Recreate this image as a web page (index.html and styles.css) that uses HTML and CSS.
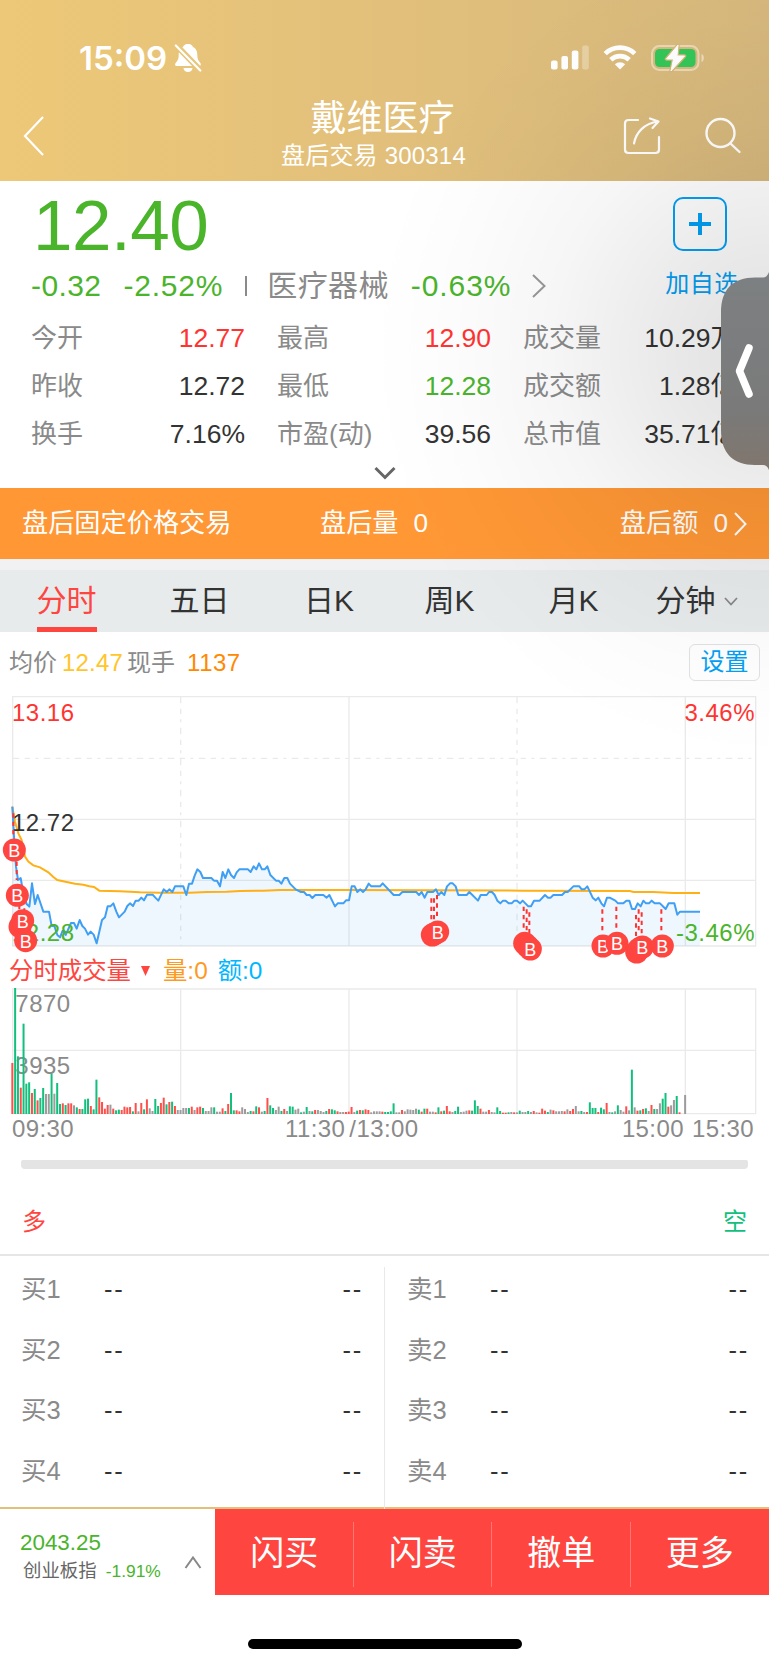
FILE: index.html
```
<!DOCTYPE html>
<html lang="zh-CN">

<head>
  <meta charset="UTF-8">
  <meta name="viewport" content="width=device-width, initial-scale=1.0">
  <title>戴维医疗 300314</title>
  <link rel="stylesheet" href="styles.css">
</head>

<body>
  <div class="page">
    <header class="header">
      <div class="status-bar">
        <span class="time">15:09</span>
        <svg class="bell" width="28" height="30" viewBox="0 0 28 30">
          <path d="M14 1C10.500 1 9.300 3.300 8.900 4.100C5.500 6 4.700 9 4.700 12C4.700 16 3.700 17.500 2 19.400C.4 21.200 1 23 3 23H25C27 23 27.500 21.200 26 19.400C24.300 17.500 23.300 16 23.300 12C23.300 9 22.500 6 19.100 4.100C18.700 3.300 17.500 1 14 1ZM9.500 25H18.500C18.300 27.500 16.500 29 14 29S9.700 27.500 9.500 25Z" fill="#fff" />
          <path d="M0 0L28 29" stroke="#e8c57a" stroke-width="6" />
          <path d="M1.800 2.500L26.300 27.500" stroke="#fff" stroke-width="2.200" stroke-linecap="round" />
        </svg>
        <svg class="signal" width="38" height="25" viewBox="0 0 38 25" fill="#fff">
          <rect x="0" y="15.500" width="6.600" height="9" rx="2" />
          <rect x="10.400" y="11" width="6.600" height="13.500" rx="2" />
          <rect x="20.800" y="5.500" width="6.600" height="19" rx="2" />
          <rect x="31.200" y=".5" width="6.600" height="24" rx="2" opacity=".3" />
        </svg>
        <svg class="wifi" width="34" height="25" viewBox="0 0 34 25" fill="none" stroke="#fff" stroke-width="4.700">
          <path d="M2.200 8.600A21.500 21.500 0 0 1 31.800 8.600" />
          <path d="M7.800 14.800A13.300 13.300 0 0 1 26.200 14.800" />
          <path d="M11.800 19.300A7.500 7.500 0 0 1 22.200 19.300L17 24.600Z" fill="#fff" stroke="none" />
        </svg>
        <svg class="battery" width="54" height="28" viewBox="0 0 54 28">
          <rect x="1" y="2" width="46.500" height="24" rx="7.500" fill="none" stroke="#fff" stroke-opacity=".45" stroke-width="2" />
          <path d="M50.500 10C53.600 11 53.600 17 50.500 18Z" fill="#fff" opacity=".5" />
          <rect x="4" y="5" width="40.500" height="18" rx="4.500" fill="#34c759" />
          <path d="M27 1L15.500 15H22.500L20 27L33.500 12H26Z" fill="#fff" stroke="#d6b779" stroke-width="3.500" stroke-linejoin="round" />
          <path d="M27 1L15.500 15H22.500L20 27L33.500 12H26Z" fill="#fff" stroke="#fff" stroke-width="1" stroke-linejoin="round" />
        </svg>
      </div>
      <div class="nav-bar">
        <svg class="back" width="22" height="42" viewBox="0 0 22 42" fill="none" stroke="#fff" stroke-width="2.200">
          <path d="M20 2L2 21L20 40" />
        </svg>
        <div class="title">
          <h1>戴维医疗</h1>
          <p>盘后交易 300314</p>
        </div>
        <div class="nav-icons">
          <svg width="38" height="38" viewBox="0 0 38 38" fill="none" stroke="#fff" stroke-width="2.200" stroke-linecap="round" stroke-linejoin="round">
            <path d="M15 3H5.500Q2 3 2 6.500V32.500Q2 36 5.500 36H32.500Q36 36 36 32.500V20" />
            <path d="M11 26.500C13 15.500 21 6.500 35 4.500M27 1.500L35.500 4.500L29.500 11" />
          </svg>
          <svg width="38" height="38" viewBox="0 0 38 38" fill="none" stroke="#fff" stroke-width="2.400" stroke-linecap="round">
            <circle cx="16.500" cy="16" r="14" />
            <path d="M26.500 26.500L35.500 35" />
          </svg>
        </div>
      </div>
    </header>

    <section class="quote">
      <div class="price-row">
        <div class="price">12.40</div>
        <button class="add" type="button">
          <svg width="24" height="24" viewBox="0 0 24 24" stroke="#02a0f5" stroke-width="4">
            <path d="M12 1V23M1 12H23" />
          </svg>
        </button>
      </div>
      <div class="change-row">
        <span class="down">-0.32</span>
        <span class="down rate">-2.52%</span>
        <span class="bar"></span>
        <span class="sector">医疗器械</span>
        <span class="down sector-rate">-0.63%</span>
        <svg width="14" height="24" viewBox="0 0 14 24" fill="none" stroke="#999" stroke-width="2">
          <path d="M1 1L12.500 12L1 23" />
        </svg>
        <span class="add-text">加自选</span>
      </div>
      <dl class="stats">
        <div><dt>今开</dt><dd class="up">12.77</dd></div>
        <div><dt>最高</dt><dd class="up">12.90</dd></div>
        <div><dt>成交量</dt><dd>10.29万</dd></div>
        <div><dt>昨收</dt><dd>12.72</dd></div>
        <div><dt>最低</dt><dd class="down">12.28</dd></div>
        <div><dt>成交额</dt><dd>1.28亿</dd></div>
        <div><dt>换手</dt><dd>7.16%</dd></div>
        <div><dt>市盈(动)</dt><dd>39.56</dd></div>
        <div><dt>总市值</dt><dd>35.71亿</dd></div>
      </dl>
      <svg class="expand" width="22" height="14" viewBox="0 0 22 14" fill="none" stroke="#666" stroke-width="3">
        <path d="M1.500 2L11 11.500L20.500 2" />
      </svg>
    </section>

    <section class="after-hours">
      <span>盘后固定价格交易</span>
      <span>盘后量<b>0</b></span>
      <span class="amount"><span>盘后额<b>0</b></span>
        <svg width="13" height="24" viewBox="0 0 13 24" fill="none" stroke="#fff" stroke-width="2">
          <path d="M1 1L11.500 12L1 23" />
        </svg>
      </span>
    </section>

    <nav class="tabs">
      <a class="active">分时</a>
      <a>五日</a>
      <a>日K</a>
      <a>周K</a>
      <a>月K</a>
      <a>分钟
        <svg width="14" height="9" viewBox="0 0 14 9" fill="none" stroke="#888" stroke-width="1.800">
          <path d="M1 1L7 7.500L13 1" />
        </svg>
      </a>
    </nav>

    <section class="chart">
      <div class="chart-info">
        <span>均价</span>
        <span class="avg">12.47</span>
        <span>现手</span>
        <span class="hand">1137</span>
        <button class="setting" type="button">设置</button>
      </div>

      <svg class="price-chart" width="769" height="266" viewBox="0 3 2307 798">
        <g class="grid">
          <path d="M38 50H2267V798H38ZM38 418H2267M38 601H2267M1047 50V798M2056 50V798" />
          <path d="M38 235H2267" stroke-dasharray="20 16 16 16 9 16" />
          <path d="M542 50V798M1551 50V798" stroke-dasharray="20 16 16 16 9 16" />
        </g>
        <path id="area" class="area" />
        <polyline class="avg-line" points="37,380 45,425 55,460 65,480 75,530 85,545 100,556 120,562 145,577 160,591 172,600 200,606 225,611 250,614 268,619 282,621 298,632 360,634 420,637 480,638 570,638 620,636 680,635 720,633 790,632 840,630 1047,630 1570,632 1890,633 1900,636 1960,636 2020,639 2100,639" />
        <polyline id="priceLine" class="price-line" />
        <g class="axis">
          <text class="up" x="36" y="122">13.16</text>
          <text class="flat" x="36" y="453">12.72</text>
          <text class="down" x="36" y="782">12.28</text>
          <text class="up" x="2265" y="122" text-anchor="end">3.46%</text>
          <text class="down" x="2265" y="782" text-anchor="end">-3.46%</text>
        </g>
        <g id="marks" class="marks"></g>
      </svg>

      <div class="volume-info">
        <span class="name">分时成交量</span>
        <svg width="11" height="11" viewBox="0 0 11 11"><path d="M1 0H10L5.500 10Z" fill="#ff4540" /></svg>
        <span class="vol">量:0</span>
        <span class="amt">额:0</span>
      </div>

      <svg class="volume-chart" width="769" height="133" viewBox="0 105 2307 399">
        <path class="grid" d="M38 117H2267V491H38ZM38 301H2267M542 117V491M1047 117V491M1551 117V491M2056 117V491" />
        <g class="axis">
          <text x="46" y="187">7870</text>
          <text x="46" y="372">3935</text>
        </g>
        <g id="bars"></g>
      </svg>

      <div class="time-axis">
        <span>09:30</span>
        <span class="noon">11:30<i>/</i>13:00</span>
        <span class="close">15:00</span>
        <span>15:30</span>
      </div>
      <div class="scroll-track"></div>
    </section>

    <section class="sides">
      <span class="long">多</span>
      <span class="short">空</span>
    </section>

    <section class="order-book">
      <ul>
        <li><span>买1</span><b>--</b><b>--</b></li>
        <li><span>买2</span><b>--</b><b>--</b></li>
        <li><span>买3</span><b>--</b><b>--</b></li>
        <li><span>买4</span><b>--</b><b>--</b></li>
      </ul>
      <ul>
        <li><span>卖1</span><b>--</b><b>--</b></li>
        <li><span>卖2</span><b>--</b><b>--</b></li>
        <li><span>卖3</span><b>--</b><b>--</b></li>
        <li><span>卖4</span><b>--</b><b>--</b></li>
      </ul>
    </section>

    <footer class="footer">
      <div class="index">
        <div>
          <div class="index-value">2043.25</div>
          <div class="index-name">创业板指 <span>-1.91%</span></div>
        </div>
        <svg width="18" height="13" viewBox="0 0 18 13" fill="none" stroke="#888" stroke-width="2">
          <path d="M1.500 12L9 1.500L16.500 12" />
        </svg>
      </div>
      <button type="button">闪买</button>
      <button type="button">闪卖</button>
      <button type="button">撤单</button>
      <button type="button">更多</button>
    </footer>
    <div class="home-indicator"></div>

    <div class="shade"></div>
    <svg class="drawer" width="48" height="206" viewBox="0 0 48 206">
      <defs>
        <linearGradient id="drawerFill" x1="0" y1="0" x2="0" y2="1">
          <stop offset="0" stop-color="#7d8082" />
          <stop offset=".7" stop-color="#7a7a7a" />
          <stop offset="1" stop-color="#80766d" />
        </linearGradient>
      </defs>
      <path d="M48 4Q46 9.500 42 9.500H34C12 9.500 0 21 0 45V162C0 185 12 197 34 197H42Q46 197 48 202Z" fill="url(#drawerFill)" />
      <path d="M28 80L18.500 103L28 126" fill="none" stroke="#fff" stroke-width="7.500" stroke-linecap="round" stroke-linejoin="round" />
    </svg>
  </div>

  <script src="chart.js"></script>
</body>

</html>
```
FILE: styles.css
```
* {
  box-sizing: border-box;
  margin: 0;
  padding: 0;
}

body {
  font-family: "Liberation Sans", "Noto Sans CJK SC", sans-serif;
  font-weight: 400;
  color: #333;
  background-color: #fff;
}

svg {
  display: block;
  flex: none;
}

button {
  font: inherit;
  border: none;
  background: none;
}

b,
i {
  font-weight: inherit;
  font-style: normal;
}

.page {
  position: relative;
  width: 769px;
  height: 1665px;
  overflow: hidden;
}

.up {
  color: #ff3431;
  fill: #ff3431;
}

.down {
  color: #4ab42b;
  fill: #4ab42b;
}

.flat {
  fill: #333;
}

/* header */
.header {
  height: 181px;
  color: #fff;
  background: linear-gradient(to right, #edc878, #e2c07b 50%, #d6b87d);
}

.status-bar {
  display: flex;
  align-items: center;
  height: 90px;
  padding: 25px 64px 0 79px;
}

.time {
  font-family: Inter, sans-serif;
  font-size: 33px;
  font-weight: 600;
}

.bell {
  margin-left: 7px;
}

.signal {
  margin-left: auto;
}

.wifi {
  margin-left: 14px;
}

.battery {
  margin-left: 14px;
}

.nav-bar {
  display: grid;
  grid-template-columns: 1fr auto 1fr;
  align-items: center;
  height: 91px;
  padding: 0 27px 0 23px;
}

.title {
  text-align: center;
  padding-bottom: 4px;
}

.title h1 {
  font-size: 36px;
  font-weight: 400;
  line-height: 44px;
}

.title p {
  padding-right: 18px;
  font-size: 24px;
  line-height: 30px;
  letter-spacing: 0.2px;
}

.nav-icons {
  display: flex;
  justify-content: flex-end;
  gap: 43px;
}

/* quote */
.quote {
  height: 307px;
  padding-left: 31px;
}

.price-row {
  display: flex;
  justify-content: space-between;
  height: 80px;
  padding-right: 42px;
}

.price {
  padding: 4px 0 0 2px;
  font-size: 71px;
  line-height: 82px;
  letter-spacing: -0.5px;
  color: #4ab42b;
}

.add {
  display: flex;
  align-items: center;
  justify-content: center;
  width: 54px;
  height: 54px;
  margin-top: 16px;
  border: 2px solid #02a0f5;
  border-radius: 10px;
}

.change-row {
  display: flex;
  align-items: center;
  height: 50px;
  font-size: 30px;
  line-height: 50px;
  letter-spacing: 0.4px;
}

.rate {
  margin-left: 22px;
  letter-spacing: 0.8px;
}

.sector-rate {
  letter-spacing: 0.9px;
}

.bar {
  width: 2px;
  height: 20px;
  margin: 0 20px 0 22px;
  background-color: #8a8a8a;
}

.sector {
  margin-right: 22px;
  color: #8a8a8a;
}

.change-row svg {
  margin-left: 21px;
}

.add-text {
  margin-left: 119px;
  padding-bottom: 5px;
  font-size: 24px;
  color: #02a0f5;
}

.stats {
  display: grid;
  grid-template-columns: repeat(3, 214px);
  column-gap: 32px;
  padding-top: 3px;
  font-size: 26px;
  line-height: 48px;
}

.stats div {
  display: flex;
  justify-content: space-between;
}

.stats dt {
  color: #8a8a8a;
}

.stats dd {
  font-size: 26.5px;
}

.expand {
  margin: 8px 0 0 343px;
}

/* after hours */
.after-hours {
  display: grid;
  grid-template-columns: 298px 1fr auto;
  align-items: center;
  height: 71px;
  padding: 0 22px 2px;
  font-size: 26.2px;
  line-height: 40px;
  color: #fff;
  background-color: #ff9735;
}

.after-hours b {
  margin-left: 15px;
}

.amount {
  display: flex;
  align-items: center;
}

.amount svg {
  margin: 3px 0 0 6px;
}

/* tabs */
.tabs {
  display: grid;
  grid-template-columns: 133px 133px 126px 115px 133px 113px;
  height: 73px;
  border-top: 11px solid #f1f1f3;
  background-color: #e7ebec;
}

.tabs a {
  display: flex;
  align-items: center;
  justify-content: center;
  font-size: 30px;
  line-height: 50px;
}

.tabs .active {
  justify-self: center;
  padding-top: 5px;
  color: #ff4540;
  border-bottom: 5px solid #ff4540;
}

.tabs svg {
  margin-left: 8px;
}

/* chart */
.chart-info {
  display: flex;
  align-items: center;
  height: 49px;
  padding: 12px 9px 0;
  font-size: 24px;
  line-height: 36px;
  color: #8a8a8a;
}

.avg {
  margin: 0 4px 0 5px;
  letter-spacing: 0.2px;
  color: #ffc52b;
}

.hand {
  margin-left: 12px;
  letter-spacing: 0.5px;
  color: #ff8a00;
}

.setting {
  width: 71px;
  height: 37px;
  margin: 0 0 1px auto;
  line-height: 34px;
  color: #02a0f5;
  border: 1px solid #e0e2e4;
  border-radius: 6px;
}

.price-chart {
  position: relative;
  overflow: visible;
}

.grid {
  fill: none;
  stroke: #eaeaea;
  stroke-width: 4;
}

.area {
  fill: #3f9cf5;
  fill-opacity: 0.09;
}

.avg-line {
  fill: none;
  stroke: #ffb014;
  stroke-width: 6;
}

.price-line {
  fill: none;
  stroke: #3f9ff5;
  stroke-width: 6;
  stroke-linejoin: round;
}

.axis {
  font-size: 72px;
  letter-spacing: 1.5px;
}

.volume-chart .axis {
  fill: #8a8a8a;
}

.marks circle {
  fill: #ff4540;
}

.marks text {
  font-size: 54px;
  fill: #fff;
  text-anchor: middle;
}

.marks path {
  stroke: #ff3431;
  stroke-width: 6;
  stroke-dasharray: 13 12;
}

.volume-info {
  display: flex;
  align-items: center;
  height: 38px;
  padding: 10px 0 0 9px;
  font-size: 24.4px;
  line-height: 28px;
}

.volume-info .name {
  margin-right: 9px;
  color: #ff4540;
}

.volume-info .vol {
  margin: 0 10px 0 12px;
  color: #ff9a1f;
}

.volume-info .amt {
  color: #00b7ff;
}

.time-axis {
  display: flex;
  height: 42px;
  padding: 0 15px 0 12px;
  font-size: 24px;
  line-height: 22px;
  letter-spacing: 0.4px;
  color: #8a8a8a;
}

.noon {
  margin-left: 211px;
}

.noon i {
  margin-left: 4px;
}

.close {
  margin: 0 8px 0 auto;
}

.scroll-track {
  height: 9px;
  margin: 0 21px;
  border-radius: 2px 2px 4px 4px;
  background-color: #e4e4e4;
}

/* order book */
.sides {
  display: flex;
  justify-content: space-between;
  height: 87px;
  padding: 35px 22px 0;
  font-size: 24px;
  line-height: 36px;
  border-bottom: 2px solid #e6e6e6;
}

.long {
  color: #ff4540;
}

.short {
  color: #13bf7d;
}

.order-book {
  display: grid;
  grid-template-columns: 385px 1fr;
  height: 251px;
  padding-top: 11px;
}

.order-book ul {
  list-style: none;
  padding: 0 20px 0 22px;
}

.order-book ul:first-child {
  padding: 0 21px;
  border-right: 1px solid #e9e9e9;
}

.order-book li {
  display: grid;
  grid-template-columns: 83px 1fr auto;
  height: 60.7px;
  font-size: 25.5px;
  line-height: 44px;
}

.order-book span {
  color: #8a8a8a;
}

.order-book b {
  letter-spacing: 1.8px;
}

/* footer */
.footer {
  display: grid;
  grid-template-columns: 215px repeat(4, 1fr);
  height: 88px;
  border-top: 2px solid #e2c07b;
}

.index {
  display: flex;
  justify-content: space-between;
  padding: 20px 13px 0 20px;
}

.index svg {
  margin-top: 27px;
}

.index-value {
  font-size: 22.4px;
  line-height: 28px;
  color: #4ab42b;
}

.index-name {
  padding-left: 3px;
  font-size: 18.4px;
  line-height: 28px;
  color: #666;
  white-space: nowrap;
}

.index-name span {
  margin-left: 4px;
  font-size: 17.4px;
  color: #4ab42b;
}

.footer button {
  padding-bottom: 3px;
  font-size: 34px;
  color: #fff;
  background: linear-gradient(#ff7773, #ff7773) right 13px / 1px 65px no-repeat #ff4540;
}

.footer button:last-child {
  background: #ff4540;
}

.home-indicator {
  width: 274px;
  height: 10px;
  margin: 44px auto 0;
  border-radius: 5px;
  background-color: #000;
}

/* side drawer and the shadow it casts over the page */
.shade {
  position: absolute;
  top: 0;
  right: 0;
  width: 400px;
  height: 800px;
  background: radial-gradient(400px 410px at 400px 350px, rgba(0, 0, 0, 0.12), rgba(0, 0, 0, 0.085) 25%, rgba(0, 0, 0, 0.035) 55%, rgba(0, 0, 0, 0.01) 80%, transparent);
  pointer-events: none;
}

.drawer {
  position: absolute;
  top: 268px;
  right: 0;
}
```
FILE: chart.js
```
const SVG = 'http://www.w3.org/2000/svg';

// minute price line, first point at 09:30
const price = `37,380 42,470 48,560 54,600 62,594 70,640 80,672 88,680 96,610 105,672 113,645
130,695 147,695 155,738 163,738 172,765 180,772 188,752 197,765 213,729 222,729 230,746 239,720
247,738 255,746 264,764 272,755 281,764 290,790 306,720 315,712 323,679 331,679 340,670 349,695
357,712 374,695 382,678 390,670 399,678 407,662 416,662 424,653 432,661 441,644 458,644 466,653
475,662 491,628 500,636 508,628 517,636 525,619 550,619 559,645 567,611 576,611 584,587 592,568
601,576 609,594 634,594 642,602 651,602 660,619 668,576 676,594 685,568 693,585 702,594 710,577
718,568 744,568 752,576 761,559 769,568 777,550 786,568 794,568 802,559 811,585 828,602 836,602
844,611 853,594 862,594 870,611 887,628 903,636 912,636 920,645 929,645 937,654 946,645 970,645
980,653 988,645 1005,679 1013,670 1030,670 1038,661 1047,661 1055,619 1064,619 1072,636 1081,628
1089,636 1097,628 1106,611 1114,619 1140,619 1148,610 1181,645 1198,645 1207,636 1249,636
1257,645 1265,636 1274,653 1282,636 1299,636 1308,628 1316,645 1324,636 1333,645 1341,619
1350,610 1358,610 1367,619 1375,645 1400,645 1408,636 1434,662 1442,645 1460,645 1467,636
1476,636 1484,645 1492,662 1501,670 1509,662 1517,662 1526,670 1535,670 1543,662 1551,662
1560,670 1568,662 1585,679 1593,679 1602,662 1619,662 1635,645 1644,653 1652,653 1660,645
1686,645 1695,636 1703,636 1720,619 1738,619 1745,628 1753,628 1762,619 1778,653 1787,661
1795,653 1804,670 1812,679 1821,653 1829,653 1846,662 1854,670 1870,670 1879,662 1888,662
1896,687 1905,687 1913,670 1922,679 1930,662 1938,670 1947,670 1955,662 1964,670 1980,670
1997,687 2006,670 2023,670 2032,704 2040,695 2100,695`;

document.getElementById('priceLine').setAttribute('points', price);
document.getElementById('area').setAttribute('d', 'M37,798 L' + price + ' L2100,798Z');

// dashed guides: [x, from, to]
const guides = [
  [40, 400, 475], [50, 545, 600], [58, 675, 715], [73, 660, 700],
  [1294, 655, 720], [1302, 655, 720], [1311, 645, 720],
  [1571, 680, 755], [1580, 688, 765], [1588, 697, 770],
  [1807, 688, 762], [1849, 680, 755], [1908, 705, 780], [1916, 688, 762], [1925, 697, 770], [1984, 688, 762]
];
// buy marks: [x, y, label], the ones covered by a later mark carry no label
const marks = [
  [43, 510, 'B'], [52, 646, 'B'], [60, 740], [68, 722, 'B'], [77, 782, 'B'],
  [1297, 765], [1302, 762], [1313, 756, 'B'], [1574, 790], [1582, 798], [1591, 807, 'B'],
  [1809, 798, 'B'], [1851, 790, 'B'], [1910, 816], [1918, 806], [1927, 801, 'B'], [1987, 798, 'B']
];

const marksGroup = document.getElementById('marks');

function add(parent, name, attrs, text) {
  const el = document.createElementNS(SVG, name);
  for (const key in attrs) el.setAttribute(key, attrs[key]);
  if (text) el.textContent = text;
  parent.appendChild(el);
}

guides.forEach(([x, y1, y2]) => add(marksGroup, 'path', { d: `M${x} ${y1}V${y2}` }));
marks.forEach(([x, y, label]) => {
  add(marksGroup, 'circle', { cx: x, cy: y, r: 34.5 });
  if (label) add(marksGroup, 'text', { x: x, y: y + 21 }, label);
});

// one bar per minute: r up, g down, k flat
const volume = `r153 g378 g173 r79 g271 g91 g95 r63 g75 r41 g48 g78 k60 k60 g121 k61 g93 g30 r32 g27
r32 r32 k26 g20 r15 g15 g44 g46 r24 g14 g103 r50 r36 r16 r27 k28 r16 g11 g13 r12
r22 r20 r21 g8 r33 k8 r33 g14 r44 k17 k9 g45 g24 r33 r49 g29 r36 g37 r24 k12
k12 k18 k18 g18 r22 k12 r20 r22 g18 k9 k9 k20 g20 k7 k7 r17 g9 r30 g63 g11
r11 r8 k20 k15 k6 g9 r8 g23 r20 k7 g9 r48 g26 g18 k12 k22 g9 r15 k9 g23
g22 k13 k16 g5 k7 g21 k9 g8 r12 k12 k9 k6 g9 r15 g14 g11 r8 k6 k6 r6
r7 r21 k6 g10 r12 g11 r14 r12 k5 k8 k8 k8 r7 g6 g6 g8 g32 k5 k5 r12
k8 k14 k13 k12 k16 g13 r7 g16 r16 k7 k7 r5 g20 r8 g10 r24 r8 k6 g9 g22
k6 k7 k10 r11 g10 g41 g24 r16 k7 k7 r12 k6 k5 g20 g9 r4 r4 g5 k6 r5
k5 g10 k6 k6 g9 k6 r9 k5 r4 r16 r10 g6 k13 r11 k8 k8 k9 r8 k14 r9
r15 k24 k8 g9 k6 r6 g35 g18 g18 r6 g19 g14 r33 k6 g5 k8 g26 k12 k7 r23
k11 g133 k20 r10 g11 r15 g17 k9 r27 g15 k15 k32 g46 g63 r22 k26 k42 g54 r5 k0 k57`;
const colors = { r: '#ff4f4a', g: '#13bf7d', k: '#9c9c9c' };
const bars = document.getElementById('bars');

volume.split(/\s+/).forEach((item, i) => {
  const h = Number(item.slice(1));
  add(bars, 'rect', { x: 34 + i * 8.41, y: 492 - h, width: 6, height: h, fill: colors[item[0]] });
});
```
